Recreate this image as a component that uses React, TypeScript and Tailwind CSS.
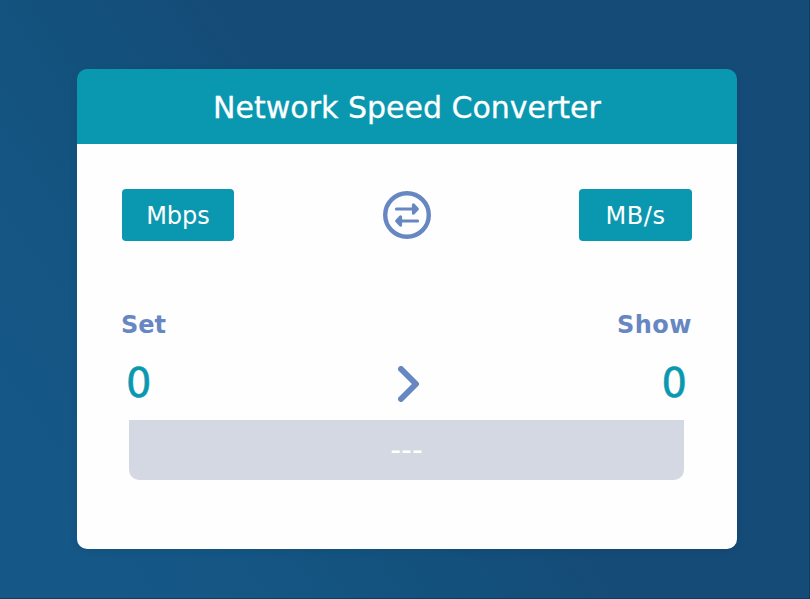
function SwapIcon() {
  return (
    <svg className="block h-12 w-12" viewBox="0 0 48 48" fill="none" stroke="#6787c3" strokeLinecap="round" strokeLinejoin="round">
      <circle cx="24" cy="24" r="21.8" strokeWidth="4.4" />
      <path d="M13.4 18H31" strokeWidth="3" />
      <path d="M30.4 13.8V22.2L34.4 18Z" fill="#6787c3" strokeWidth="3" />
      <path d="M17 30H34.6" strokeWidth="3" />
      <path d="M17.6 25.8V34.2L13.6 30Z" fill="#6787c3" strokeWidth="3" />
    </svg>
  );
}

function ChevronIcon() {
  return (
    <svg className="mt-[7px] ml-[5px] block h-9 w-[22px]" viewBox="0 0 22 36" fill="none" stroke="#6787c3" strokeWidth="6" strokeLinecap="round" strokeLinejoin="round">
      <path d="M3 3L18 18L3 33" />
    </svg>
  );
}

export default function App() {
  return (
    <div className="h-[599px] w-[810px] overflow-hidden border-r border-b border-[#103d62] bg-[linear-gradient(56deg,#155887_0%,#155685_20%,#13517c_38%,#154b77_52%,#154b77_100%)] pt-[69px] pl-[77px] font-['DejaVu_Sans',sans-serif]">
      <main className="h-[480px] w-[660px] rounded-[10px] shadow-[0_2px_10px_rgba(0,0,0,0.07)]">
        <header className="flex h-[75px] items-center justify-center rounded-t-[10px] bg-[#0a98b1]">
          <h1 className="pt-0.5 text-[30px] leading-none whitespace-nowrap text-white [-webkit-text-stroke:0.3px_white]">Network Speed Converter</h1>
        </header>
        <div className="h-[405px] rounded-b-[10px] bg-[#fefefe]">
          <section className="flex items-center justify-between px-[45px] pt-[45px]">
            <button className="h-[52px] w-28 rounded-[4px] bg-[#0a98b1] pt-0.5 text-2xl text-white">Mbps</button>
            <SwapIcon />
            <button className="h-[52px] w-[113px] rounded-[4px] bg-[#0a98b1] pt-0.5 text-2xl tracking-[0.6px] text-white">MB/s</button>
          </section>
          <section className="flex justify-between pr-[45px] pl-[44px] pt-[68px] text-2xl font-bold text-[#6787c3]">
            <h2>Set</h2>
            <h2 className="tracking-[0.5px]">Show</h2>
          </section>
          <section className="flex h-[79px] items-center justify-between pr-[50px] pl-[49px] text-[40px] leading-none text-[#0a98b1] [-webkit-text-stroke:0.6px_#0a98b1]">
            <span className="pt-[5px]">0</span>
            <ChevronIcon />
            <span className="pt-[5px]">0</span>
          </section>
          <footer className="ml-[52px] flex h-[60px] w-[555px] items-center justify-center rounded-b-[10px] bg-[#d4d8e3] pb-px text-[30px] text-white">
            ---
          </footer>
        </div>
      </main>
    </div>
  );
}
